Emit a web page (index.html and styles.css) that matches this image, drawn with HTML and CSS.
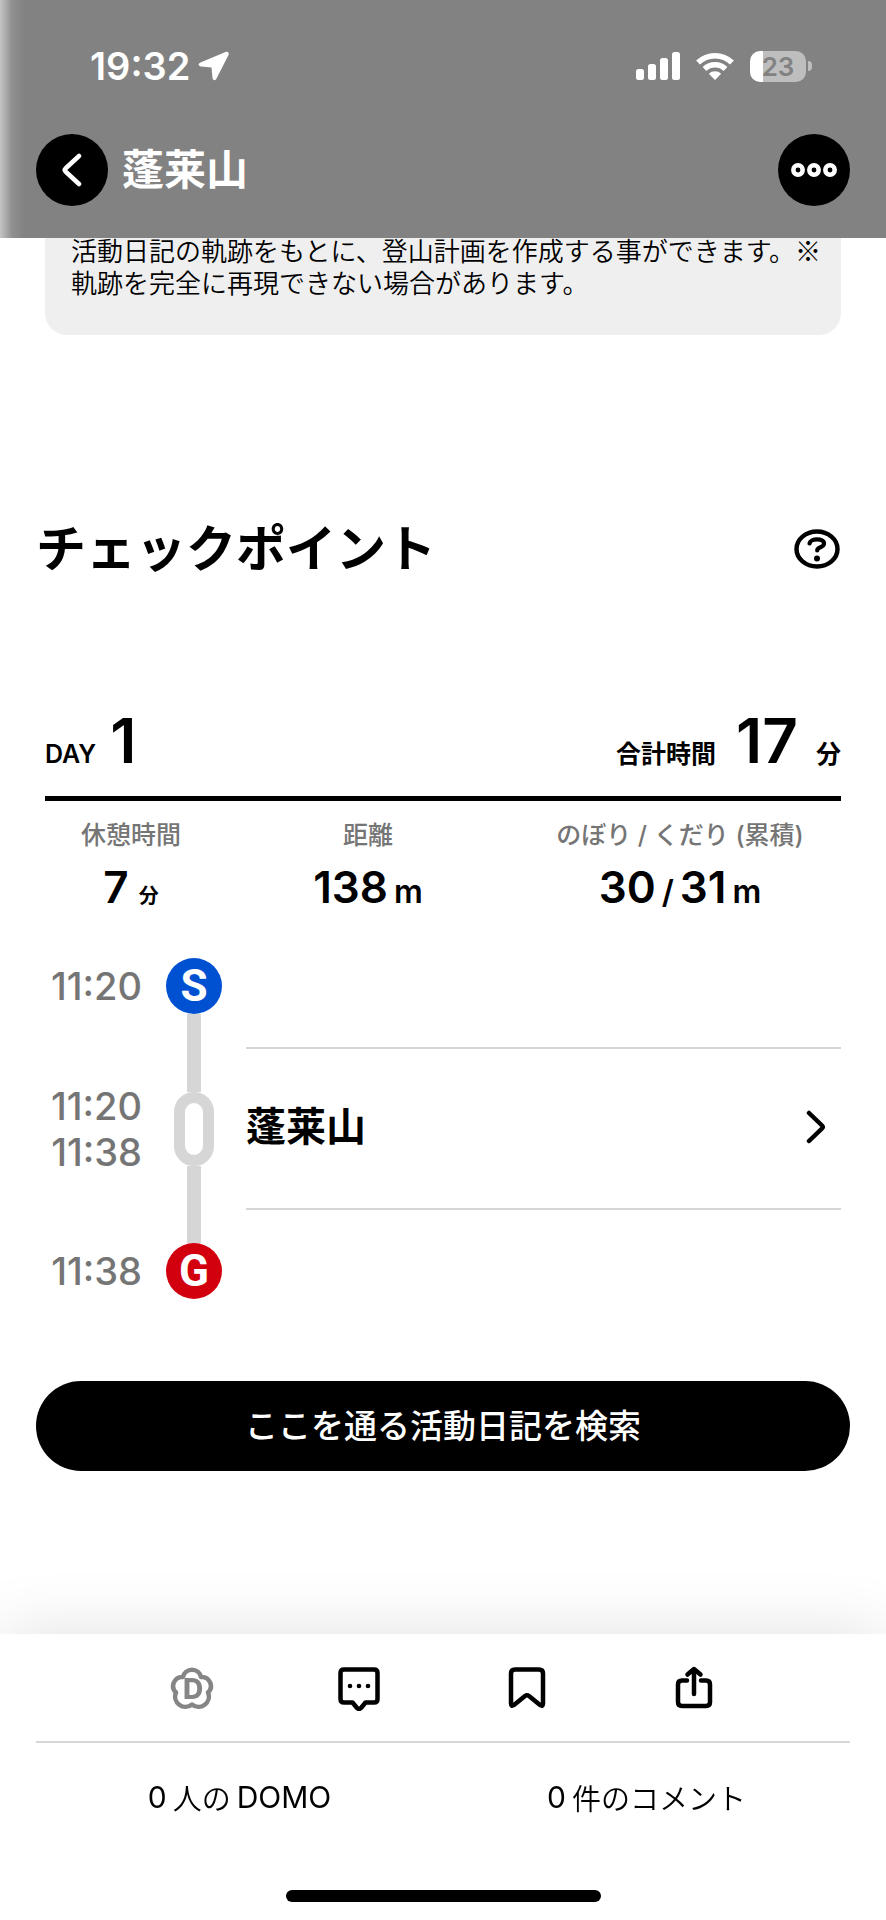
FILE: index.html
```html
<!DOCTYPE html>
<html lang="ja">
<head>
  <meta charset="UTF-8">
  <meta name="viewport" content="width=device-width, initial-scale=1.0">
  <title>蓬莱山</title>
  <link rel="stylesheet" href="styles.css">
</head>
<body>
  <header class="top">
    <div class="status">
      <div class="status-left">
        <span class="clock">19:32</span>
        <svg width="32" height="30" viewBox="0 0 32 30"><path d="M27.500 1 2.500 11.500c-3 1.300-2 3.800.5 4l10.500 1 1 10.500c.2 2.500 3 3 4 .5L30.500 4c.9-2.300-.7-3.900-3-3z" fill="#fff"/></svg>
      </div>
      <div class="status-right">
        <svg width="44" height="28" viewBox="0 0 44 28" fill="#fff">
          <rect x="0" y="17" width="8" height="11" rx="2.500"/>
          <rect x="12" y="12" width="8" height="16" rx="2.500"/>
          <rect x="24" y="6" width="8" height="22" rx="2.500"/>
          <rect x="36" y="0" width="8" height="28" rx="2.500"/>
        </svg>
        <svg width="38" height="28" viewBox="0 0 38 28">
          <path d="M2 10.500a24.500 24.500 0 0 1 34 0M8.500 17a15.300 15.300 0 0 1 21 0" fill="none" stroke="#fff" stroke-width="5.500"/>
          <path d="M19 28l-6.200-6.300a9 9 0 0 1 12.400 0z" fill="#fff"/>
        </svg>
        <div class="battery"><span class="battery-level">23</span></div>
      </div>
    </div>
    <nav class="nav">
      <button class="round-btn" type="button" aria-label="戻る">
        <svg width="20" height="34" viewBox="0 0 20 34"><path d="M17 3 3.500 15.500q-1.500 1.500 0 3L17 31" fill="none" stroke="#fff" stroke-width="4.500" stroke-linecap="round" stroke-linejoin="round"/></svg>
      </button>
      <h1>蓬莱山</h1>
      <button class="round-btn" type="button" aria-label="メニュー">
        <svg width="46" height="14" viewBox="0 0 46 14" fill="none" stroke="#fff" stroke-width="4.500"><circle cx="7" cy="7" r="4.700"/><circle cx="23" cy="7" r="4.700"/><circle cx="39" cy="7" r="4.700"/></svg>
      </button>
    </nav>
  </header>

  <main>
    <p class="note">活動日記の軌跡をもとに、登山計画を作成する事ができます。※軌跡を完全に再現できない場合があります。</p>

    <div class="section-head">
      <h2>チェックポイント</h2>
      <button class="help-btn" type="button" aria-label="ヘルプ">
        <svg width="46" height="40" viewBox="0 0 46 40" fill="none" stroke="#000">
          <ellipse cx="23" cy="20" rx="20.500" ry="17.500" stroke-width="4.500"/>
          <path d="M15.500 14.500c1-5.500 14.500-5.500 14.500 0 0 4.500-6.800 3-6.800 7" stroke-width="4.200" stroke-linecap="round"/>
          <circle cx="23" cy="29.500" r="3" fill="#000" stroke="none"/>
        </svg>
      </button>
    </div>

    <section class="day">
      <div class="day-head">
        <span class="label">DAY</span>
        <span class="big">1</span>
        <span class="label total">合計時間</span>
        <span class="big">17</span>
        <span class="label minutes">分</span>
      </div>

      <dl class="stats">
        <div>
          <dt>休憩時間</dt>
          <dd><b>7</b><small class="min">分</small></dd>
        </div>
        <div>
          <dt>距離</dt>
          <dd><b>138</b><small>m</small></dd>
        </div>
        <div>
          <dt>のぼり / くだり (累積)</dt>
          <dd><b>30</b><small>/</small><b>31</b><small>m</small></dd>
        </div>
      </dl>

      <ol class="route">
        <li>
          <div class="times"><time>11:20</time></div>
          <div class="rail"><i></i><span class="mark start">S</span><i class="line"></i></div>
          <div class="spot"></div>
        </li>
        <li>
          <div class="times"><time>11:20</time><time>11:38</time></div>
          <div class="rail"><i class="line"></i><span class="pass"></span><i class="line"></i></div>
          <a class="spot link" href="#">
            蓬莱山
            <svg width="20" height="34" viewBox="0 0 20 34"><path d="M3 3l13 12.500q1.500 1.500 0 3L3 31" fill="none" stroke="#000" stroke-width="4.500" stroke-linecap="round" stroke-linejoin="round"/></svg>
          </a>
        </li>
        <li>
          <div class="times"><time>11:38</time></div>
          <div class="rail"><i class="line"></i><span class="mark goal">G</span><i></i></div>
          <div class="spot"></div>
        </li>
      </ol>
    </section>

    <button class="search-btn" type="button">ここを通る活動日記を検索</button>
  </main>

  <footer class="bottom">
    <div class="actions">
      <button type="button" aria-label="DOMOを送る">
        <svg width="46" height="46" viewBox="0 0 46 46">
          <path d="M14 12A9.200 9.200 0 0 1 32 12A9 9 0 0 1 39 27.500A10.300 10.300 0 0 1 23 39.500A10.300 10.300 0 0 1 7 27.500A9 9 0 0 1 14 12z" fill="none" stroke="#858585" stroke-width="4.500" stroke-linejoin="round"/>
          <text x="24" y="34" class="domo-d">D</text>
        </svg>
      </button>
      <button type="button" aria-label="コメント">
        <svg width="46" height="46" viewBox="0 0 46 46">
          <path d="M8 4.500h30q3.500 0 3.500 3.500v26q0 3.500-3.500 3.500h-8.500L25 43q-2 2-4 0l-4.500-5.500H8q-3.500 0-3.500-3.500V8q0-3.500 3.500-3.500z" fill="none" stroke="#000" stroke-width="4.500" stroke-linejoin="round"/>
          <circle cx="14" cy="21" r="2.300"/><circle cx="23" cy="21" r="2.300"/><circle cx="32" cy="21" r="2.300"/>
        </svg>
      </button>
      <button type="button" aria-label="ブックマーク">
        <svg width="46" height="46" viewBox="0 0 46 46"><path d="M11 4.500h24q4 0 4 4v30q0 3.500-3 1.500L25 31q-2-1.500-4 0L10 40q-3 2-3-1.500v-30q0-4 4-4z" fill="none" stroke="#000" stroke-width="4.500" stroke-linejoin="round"/></svg>
      </button>
      <button type="button" aria-label="共有">
        <svg width="46" height="46" viewBox="0 0 46 46"><path d="M16 15.500h-5q-4 0-4 4V37q0 4 4 4h24q4 0 4-4V19.500q0-4-4-4h-5M23 29V4.500M16.500 9.500 23 4l6.500 5.500" fill="none" stroke="#000" stroke-width="4.500" stroke-linecap="round" stroke-linejoin="round"/></svg>
      </button>
    </div>
    <div class="counts">
      <a href="#"><span>0</span><span class="ja">人の</span><span>DOMO</span></a>
      <a href="#"><span>0</span><span class="ja">件のコメント</span></a>
    </div>
    <div class="home-bar"></div>
  </footer>
</body>
</html>
```
FILE: styles.css
```css
:root {
  --gray: #757575;
  --line: #d6d6d6;
  --bar: #828282;
}

* {
  box-sizing: border-box;
  margin: 0;
  padding: 0;
}

body {
  font-family: Inter, "Noto Sans CJK JP", sans-serif;
  background: #fff;
  color: #000;
}

svg { display: block; }

button {
  border: none;
  background: none;
  font-family: inherit;
  cursor: pointer;
}

a {
  color: inherit;
  text-decoration: none;
}

/* header */
.top {
  position: fixed;
  top: 0;
  left: 0;
  right: 0;
  z-index: 2;
  padding: 0 36px 30px;
  background: linear-gradient(to right, #c4c4c4, #909090 12px, var(--bar) 24px);
  color: #fff;
}

.status {
  display: flex;
  justify-content: space-between;
  height: 132px;
  padding: 0 38px 0 54px;
}

.status-left,
.status-right {
  display: flex;
  align-items: center;
}

.status-left { gap: 8px; }
.status-right { gap: 16px; }

.clock {
  font-size: 38px;
  font-weight: 600;
}

.battery {
  display: flex;
  align-items: center;
}

.battery::after {
  content: "";
  width: 4px;
  height: 10px;
  margin-left: 2px;
  border-radius: 0 4px 4px 0;
  background: #bebebe;
}

.battery-level {
  width: 56px;
  border-radius: 10px;
  background: linear-gradient(to right, #fff 13px, #bebebe 13px);
  color: var(--bar);
  font-size: 26px;
  font-weight: 600;
  line-height: 31px;
  text-align: center;
}

.nav {
  display: flex;
  align-items: center;
  gap: 14px;
  height: 76px;
}

.nav h1 {
  flex: 1;
  font-size: 42px;
  line-height: 60px;
}

.round-btn {
  display: flex;
  align-items: center;
  justify-content: center;
  width: 72px;
  height: 72px;
  border-radius: 50%;
  background: #000;
}

/* content */
main { padding: 212px 36px 440px; }

.note {
  margin: 0 9px;
  padding: 22px 14px 37px 26px;
  border-radius: 0 0 22px 22px;
  background: #efefef;
  font-family: "Noto Sans CJK JP", sans-serif;
  font-size: 26px;
  font-weight: 350;
  line-height: 32px;
}

.section-head {
  display: flex;
  align-items: center;
  justify-content: space-between;
  margin-top: 184px;
}

.section-head h2 {
  font-size: 50px;
  line-height: 60px;
}

.help-btn { margin-right: 10px; }

.day { margin: 126px 9px 0; }

.day-head {
  display: flex;
  align-items: baseline;
  padding-bottom: 19px;
  border-bottom: 5px solid #000;
}

.label {
  font-size: 25px;
  font-weight: 600;
  line-height: 36px;
}

.big {
  margin-left: 14px;
  font-size: 62px;
  font-weight: 600;
  line-height: 72px;
}

.total { margin-left: auto; }
.total + .big { margin-left: 20px; }
.minutes { margin-left: 18px; }

.stats {
  display: grid;
  grid-template-columns: 172fr 302fr 322fr;
  padding-top: 16px;
  text-align: center;
}

.stats dt {
  color: var(--gray);
  font-size: 25px;
  font-weight: 500;
  line-height: 36px;
}

.stats dd {
  display: flex;
  align-items: baseline;
  justify-content: center;
  gap: 6px;
  margin-top: 6px;
  line-height: 56px;
}

.stats b {
  font-size: 44px;
  font-weight: 600;
}

.stats small {
  font-size: 32px;
  font-weight: 600;
  line-height: 36px;
}

.stats .min {
  margin-left: 4px;
  font-size: 20px;
}

/* route timeline */
.route {
  margin-top: 10px;
  list-style: none;
}

.route li {
  display: flex;
  gap: 24px;
  height: 122px;
}

.route li:nth-child(2) { height: 163px; }

.times {
  display: flex;
  flex-direction: column;
  justify-content: center;
  width: 97px;
  color: var(--gray);
  font-size: 38px;
  font-weight: 500;
  line-height: 46px;
  text-align: right;
}

.rail {
  display: flex;
  flex-direction: column;
  align-items: center;
  width: 56px;
}

.rail i {
  flex: 1;
  width: 14px;
}

.rail .line { background: var(--line); }

.mark {
  width: 56px;
  border-radius: 50%;
  color: #fff;
  font-family: Roboto, sans-serif;
  font-size: 44px;
  font-weight: 700;
  line-height: 56px;
  text-align: center;
}

.start { background: #0050d2; }
.goal { background: #d2000f; }

.pass {
  width: 40px;
  height: 74px;
  border: 11px solid var(--line);
  border-radius: 20px;
}

.spot { flex: 1; }

.link {
  display: flex;
  align-items: center;
  justify-content: space-between;
  padding: 0 15px 4px 0;
  border-top: 2px solid var(--line);
  border-bottom: 2px solid var(--line);
  font-size: 40px;
  font-weight: 700;
  line-height: 48px;
}

.search-btn {
  width: 100%;
  height: 90px;
  margin-top: 49px;
  border-radius: 45px;
  background: #000;
  color: #fff;
  font-size: 33px;
  font-weight: 500;
  line-height: 48px;
}

/* bottom bar */
.bottom {
  position: fixed;
  bottom: 0;
  left: 0;
  right: 0;
  padding: 0 36px 18px;
  background: #fff;
  box-shadow: 0 0 64px rgba(0, 0, 0, 0.12);
}

.actions {
  display: grid;
  grid-template-columns: repeat(4, 1fr);
  justify-items: center;
  height: 109px;
  padding: 0 72px;
  border-bottom: 2px solid var(--line);
}

.domo-d {
  fill: #858585;
  font-size: 28px;
  font-weight: 800;
  text-anchor: middle;
}

.counts {
  display: grid;
  grid-template-columns: 1fr 1fr;
  height: 108px;
}

.counts a {
  display: flex;
  align-items: center;
  justify-content: center;
  gap: 6px;
  font-size: 30px;
}

.counts .ja {
  font-size: 29px;
  font-weight: 350;
}

.home-bar {
  width: 315px;
  height: 12px;
  margin: 39px auto 0;
  border-radius: 6px;
  background: #000;
}
```
